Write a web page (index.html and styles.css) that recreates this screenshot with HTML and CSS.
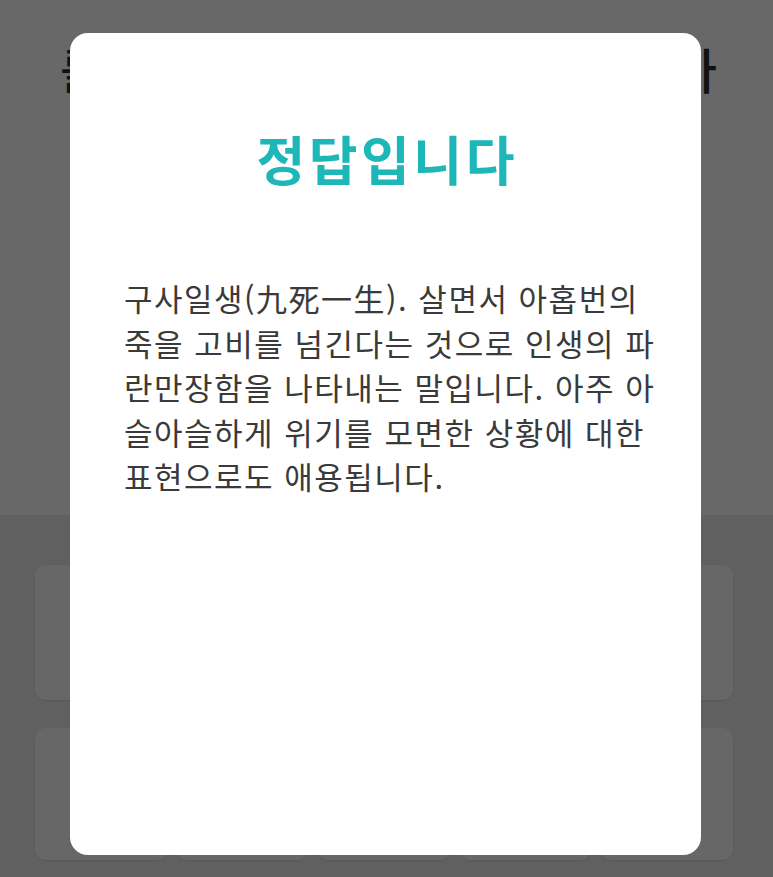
FILE: index.html
```html
<!DOCTYPE html>
<html lang="ko">
<head>
<meta charset="utf-8">
<title>정답입니다</title>
<link rel="stylesheet" href="styles.css">
</head>
<body>
<div class="page">
  <header class="top">
    <div class="top-bar">
      <span class="top-left">를</span>
      <span class="top-right">다</span>
    </div>
  </header>
  <section class="choices">
    <div class="card card-wide"></div>
    <div class="card-row">
      <div class="card"></div>
      <div class="card"></div>
      <div class="card"></div>
      <div class="card"></div>
      <div class="card"></div>
    </div>
  </section>
</div>
<div class="overlay">
  <div class="modal">
    <h1 class="modal-title">정답입니다</h1>
    <p class="modal-text">구사일생(九死一生). 살면서 아홉번의<br>죽을 고비를 넘긴다는 것으로 인생의 파<br>란만장함을 나타내는 말입니다. 아주 아<br>슬아슬하게 위기를 모면한 상황에 대한<br>표현으로도 애용됩니다.</p>
  </div>
</div>
</body>
</html>
```

FILE: styles.css
```css
html, body {
  margin: 0;
  padding: 0;
}
body {
  width: 773px;
  height: 877px;
  overflow: hidden;
  background: #606060;
  font-family: "Noto Sans CJK KR", "Noto Sans", sans-serif;
}
.page {
  display: flex;
  flex-direction: column;
  height: 877px;
}
.top {
  height: 515px;
  background: #686868;
}
.top-bar {
  display: flex;
  justify-content: space-between;
  padding: 33px 56px 0 60px;
  font-size: 48px;
  line-height: 70px;
  font-weight: 500;
  color: #111111;
}
.choices {
  flex: 1;
  display: flex;
  flex-direction: column;
  gap: 28px;
  padding: 50px 40px 0 35px;
}
.card {
  background: #676767;
  border-radius: 10px;
  box-shadow: 0 1px 2px rgba(0, 0, 0, 0.08);
}
.card-wide {
  height: 135px;
}
.card-row {
  display: flex;
  gap: 10px;
}
.card-row .card {
  flex: 1;
  height: 132px;
}
.overlay {
  position: fixed;
  inset: 0;
  display: flex;
  justify-content: flex-start;
  align-items: flex-start;
  padding: 33px 0 0 70px;
}
.modal {
  width: 631px;
  height: 822px;
  box-sizing: border-box;
  background: #ffffff;
  border-radius: 18px;
  padding: 85px 54px 0 54px;
}
.modal-title {
  margin: 0;
  text-align: center;
  font-size: 53px;
  line-height: 80px;
  font-weight: 700;
  letter-spacing: 3.5px;
  text-indent: 3.5px;
  color: #1eb7b7;
}
.modal-text {
  margin: 78px 0 0 0;
  font-size: 31px;
  line-height: 44.5px;
  letter-spacing: 1.5px;
  color: #3a3a3a;
  white-space: nowrap;
}
```
